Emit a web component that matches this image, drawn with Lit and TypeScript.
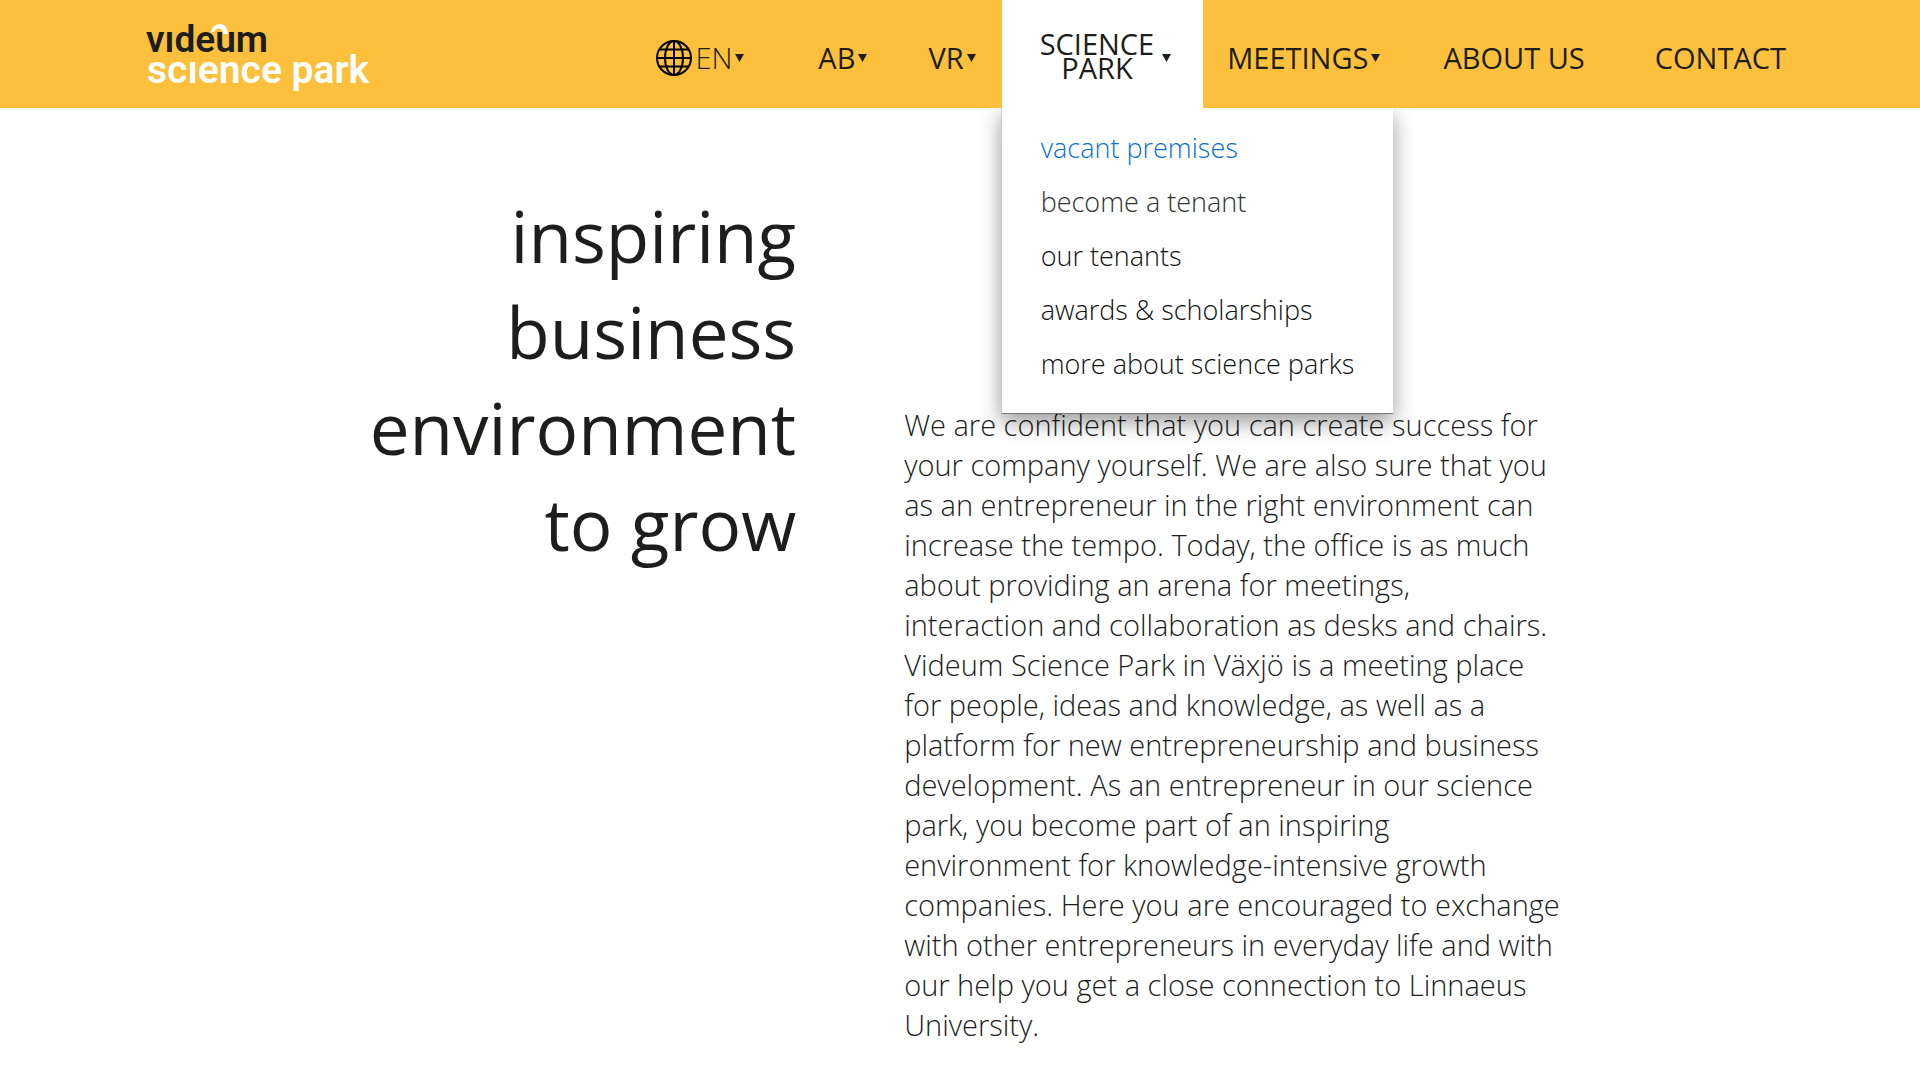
import { LitElement, html, css, svg, nothing } from "lit";
import { customElement, state } from "lit/decorators.js";
import { classMap } from "lit/directives/class-map.js";

interface MenuEntry {
  label: string;
  tone?: "active" | "soft";
}

const SCIENCE_PARK_MENU: MenuEntry[] = [
  { label: "vacant premises", tone: "active" },
  { label: "become a tenant", tone: "soft" },
  { label: "our tenants" },
  { label: "awards & scholarships" },
  { label: "more about science parks" },
];

@customElement("site-logo")
export class SiteLogo extends LitElement {
  static styles = css`
    :host {
      display: block;
    }
    .logo {
      display: block;
      width: 228px;
      height: 80px;
      font-family: Roboto, "Liberation Sans", sans-serif;
      font-weight: 600;
    }
    .dark {
      fill: #1d1d1b;
      font-size: 37px;
    }
    .light {
      fill: #fff;
      font-size: 39px;
    }
  `;

  render() {
    return html`
      <svg class="logo" viewBox="0 0 228 80" role="img" aria-label="Videum Science Park">
        <text class="dark" x="2" y="38">vıdeum</text>
        <text class="light" x="3" y="69">scıence park</text>
        <path
          d="M67 18 C68 13 71 10 76 10 C81 10 84 14 84 20 L79 20 C79 16 77 14.500 75 14.500 C72 14.500 71 16 70 18 Z"
          fill="#fff"
        />
      </svg>
    `;
  }
}

@customElement("site-header")
export class SiteHeader extends LitElement {
  @state() private open = true;

  static styles = css`
    :host {
      display: block;
      background: #fcc03c;
    }
    .bar {
      display: flex;
      justify-content: space-between;
      align-items: stretch;
      min-height: 108px;
      padding: 0 99px 0 144px;
    }
    .home {
      display: flex;
      align-items: center;
      text-decoration: none;
    }
    .nav {
      display: flex;
      align-items: stretch;
    }
    .cell {
      display: flex;
      position: relative;
    }
    .item {
      display: flex;
      align-items: center;
      gap: 3px;
      margin: 0;
      padding: 8px 26px 0 35px;
      border: 0;
      background: none;
      color: #1d1d1b;
      font: 400 29px/40px "Open Sans", "Noto Sans", sans-serif;
      text-decoration: none;
      white-space: nowrap;
      cursor: pointer;
    }
    .plain {
      padding-right: 35px;
    }
    .wide {
      padding-left: 48px;
    }
    .tight {
      padding-left: 24px;
      padding-right: 28px;
    }
    .lang {
      font-weight: 300;
    }
    .globe {
      width: 36px;
      height: 36px;
    }
    .arrow {
      width: 9px;
      height: 8px;
      fill: #1d1d1b;
    }
    .tab {
      gap: 8px;
      padding: 8px 32px 0 38px;
    }
    .tab.open {
      background: #fff;
    }
    .stack {
      display: flex;
      flex-direction: column;
      align-items: center;
      padding-bottom: 4px;
      line-height: 24px;
    }
    .menu {
      position: absolute;
      top: 100%;
      left: -1px;
      z-index: 2;
      margin: 0;
      padding: 13px 39px 22px;
      list-style: none;
      background: #fff;
      border-left: 1px solid #ccc;
      border-bottom: 1px solid #777;
      box-shadow: 0 8px 20px rgba(0, 0, 0, 0.4);
      clip-path: inset(0 -40px -40px -40px);
    }
    .link {
      display: block;
      color: #111;
      font: 300 27px/54px "Open Sans", "Noto Sans", sans-serif;
      text-decoration: none;
      white-space: nowrap;
    }
    .link.soft {
      color: #333;
    }
    .link.active {
      color: #0a6fd0;
    }
  `;

  private arrow() {
    return html`<svg class="arrow" viewBox="0 0 9 8" aria-hidden="true">${svg`<path d="M0 0H9L4.500 8Z" />`}</svg>`;
  }

  private globe() {
    return html`
      <svg class="globe" viewBox="0 0 36 36" fill="none" stroke="#000" stroke-width="2" aria-hidden="true">
        <circle cx="18" cy="18" r="17" />
        <ellipse cx="18" cy="18" rx="9" ry="17" />
        <path d="M18 1V35M1 18H35M4 9.500H32M4 26.500H32" />
      </svg>
    `;
  }

  render() {
    return html`
      <header class="bar">
        <a class="home" href="#home"><site-logo></site-logo></a>
        <nav class="nav" aria-label="Main">
          <button class="item lang" type="button">${this.globe()}<span>EN</span>${this.arrow()}</button>
          <button class="item wide" type="button"><span>AB</span>${this.arrow()}</button>
          <button class="item" type="button"><span>VR</span>${this.arrow()}</button>
          <div class="cell">
            <button
              class=${classMap({ item: true, tab: true, open: this.open })}
              type="button"
              aria-expanded=${this.open ? "true" : "false"}
              @click=${() => (this.open = !this.open)}
            >
              <span class="stack"><span>SCIENCE</span><span>PARK</span></span>${this.arrow()}
            </button>
            ${this.open
              ? html`<ul class="menu">
                  ${SCIENCE_PARK_MENU.map(
                    (m) => html`<li>
                      <a class=${classMap({ link: true, active: m.tone === "active", soft: m.tone === "soft" })} href="#park">${m.label}</a>
                    </li>`
                  )}
                </ul>`
              : nothing}
          </div>
          <button class="item tight" type="button"><span>MEETINGS</span>${this.arrow()}</button>
          <a class="item plain" href="#about">ABOUT US</a>
          <a class="item plain" href="#contact">CONTACT</a>
        </nav>
      </header>
    `;
  }
}

@customElement("app-root")
export class AppRoot extends LitElement {
  static styles = css`
    :host {
      display: block;
      min-height: 100vh;
      background: #fff;
      color: #1d1d1b;
      font-family: "Open Sans", "Noto Sans", sans-serif;
    }
    .page {
      display: grid;
      grid-template-columns: 0.675fr 1fr;
      column-gap: 108px;
      max-width: 1240px;
      margin: 0 auto;
      padding: 80px 24px 24px;
    }
    .title {
      margin: 0;
      font-size: 71px;
      line-height: 96px;
      font-weight: 400;
      text-align: right;
    }
    .text {
      margin: 0;
      padding-top: 217px;
      font-size: 29px;
      line-height: 40px;
      font-weight: 300;
    }
  `;

  render() {
    return html`
      <site-header></site-header>
      <main class="page">
        <h1 class="title">inspiring business environment to grow</h1>
        <p class="text">
          We are confident that you can create success for your company yourself. We are also sure that you as an
          entrepreneur in the right environment can increase the tempo. Today, the office is as much about providing an
          arena for meetings,<br />
          interaction and collaboration as desks and chairs.<br />
          Videum Science Park in Växjö is a meeting place<br />
          for people, ideas and knowledge, as well as a<br />
          platform for new entrepreneurship and business<br />
          development. As an entrepreneur in our science<br />
          park, you become part of an inspiring<br />
          environment for knowledge-intensive growth<br />
          companies. Here you are encouraged to exchange with other entrepreneurs in everyday life and with<br />
          our help you get a close connection to Linnaeus University.
        </p>
      </main>
    `;
  }
}
